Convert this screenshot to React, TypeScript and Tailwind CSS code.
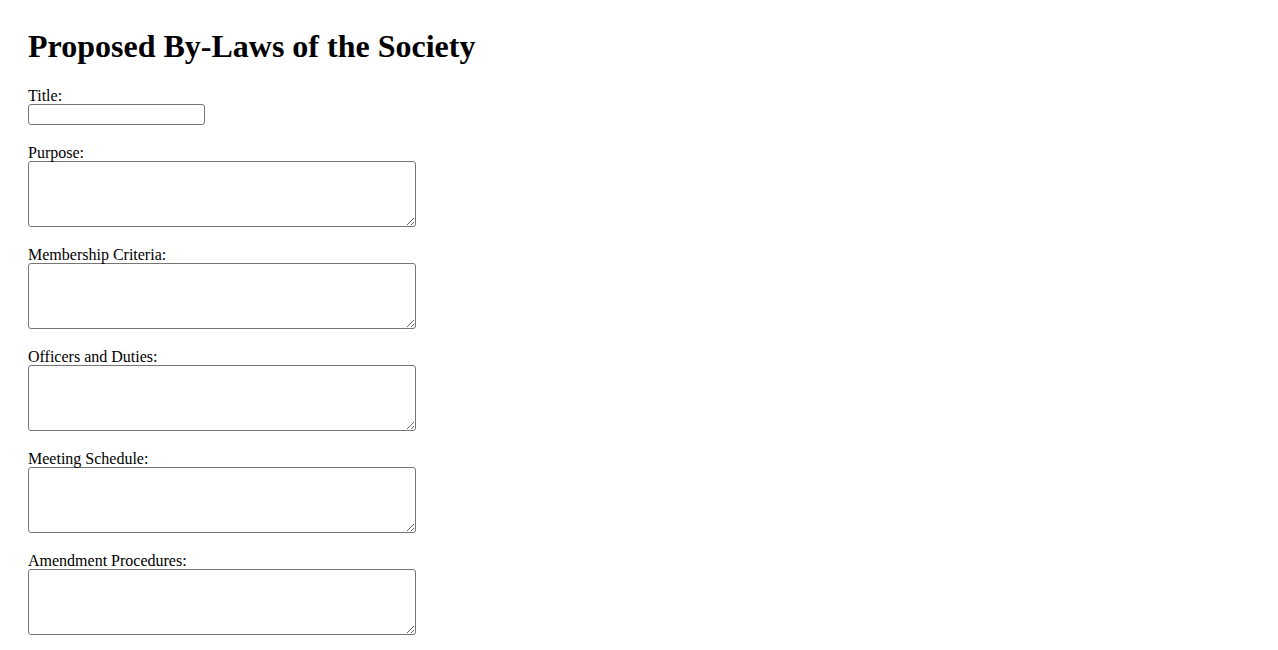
const fields = [
  "Purpose:",
  "Membership Criteria:",
  "Officers and Duties:",
  "Meeting Schedule:",
  "Amendment Procedures:",
];

export default function App() {
  return (
    <div className="min-h-screen bg-white px-[28px] pt-[28px] text-black font-['Liberation_Serif',_'Times_New_Roman',_serif]">
      <h1 className="text-[32px] leading-[37px] font-bold mb-[21px]">Proposed By-Laws of the Society</h1>
      <form>
        <div className="mb-[18px]">
          <label className="block text-[16px] leading-[17px] pt-[1px]">Title:</label>
          <input
            type="text"
            className="block w-[177px] h-[21px] border border-[#767676] rounded-[3px] px-[2px] text-[13px] font-['Liberation_Sans',_sans-serif]"
          />
        </div>
        {fields.map((f) => (
          <div key={f} className="mb-[18px]">
            <label className="block text-[16px] leading-[17px] pt-[1px]">{f}</label>
            <textarea className="block w-[388px] h-[66px] border border-[#767676] rounded-[3px] p-[2px] text-[13px] font-['Liberation_Mono',_monospace]" />
          </div>
        ))}
      </form>
    </div>
  );
}
